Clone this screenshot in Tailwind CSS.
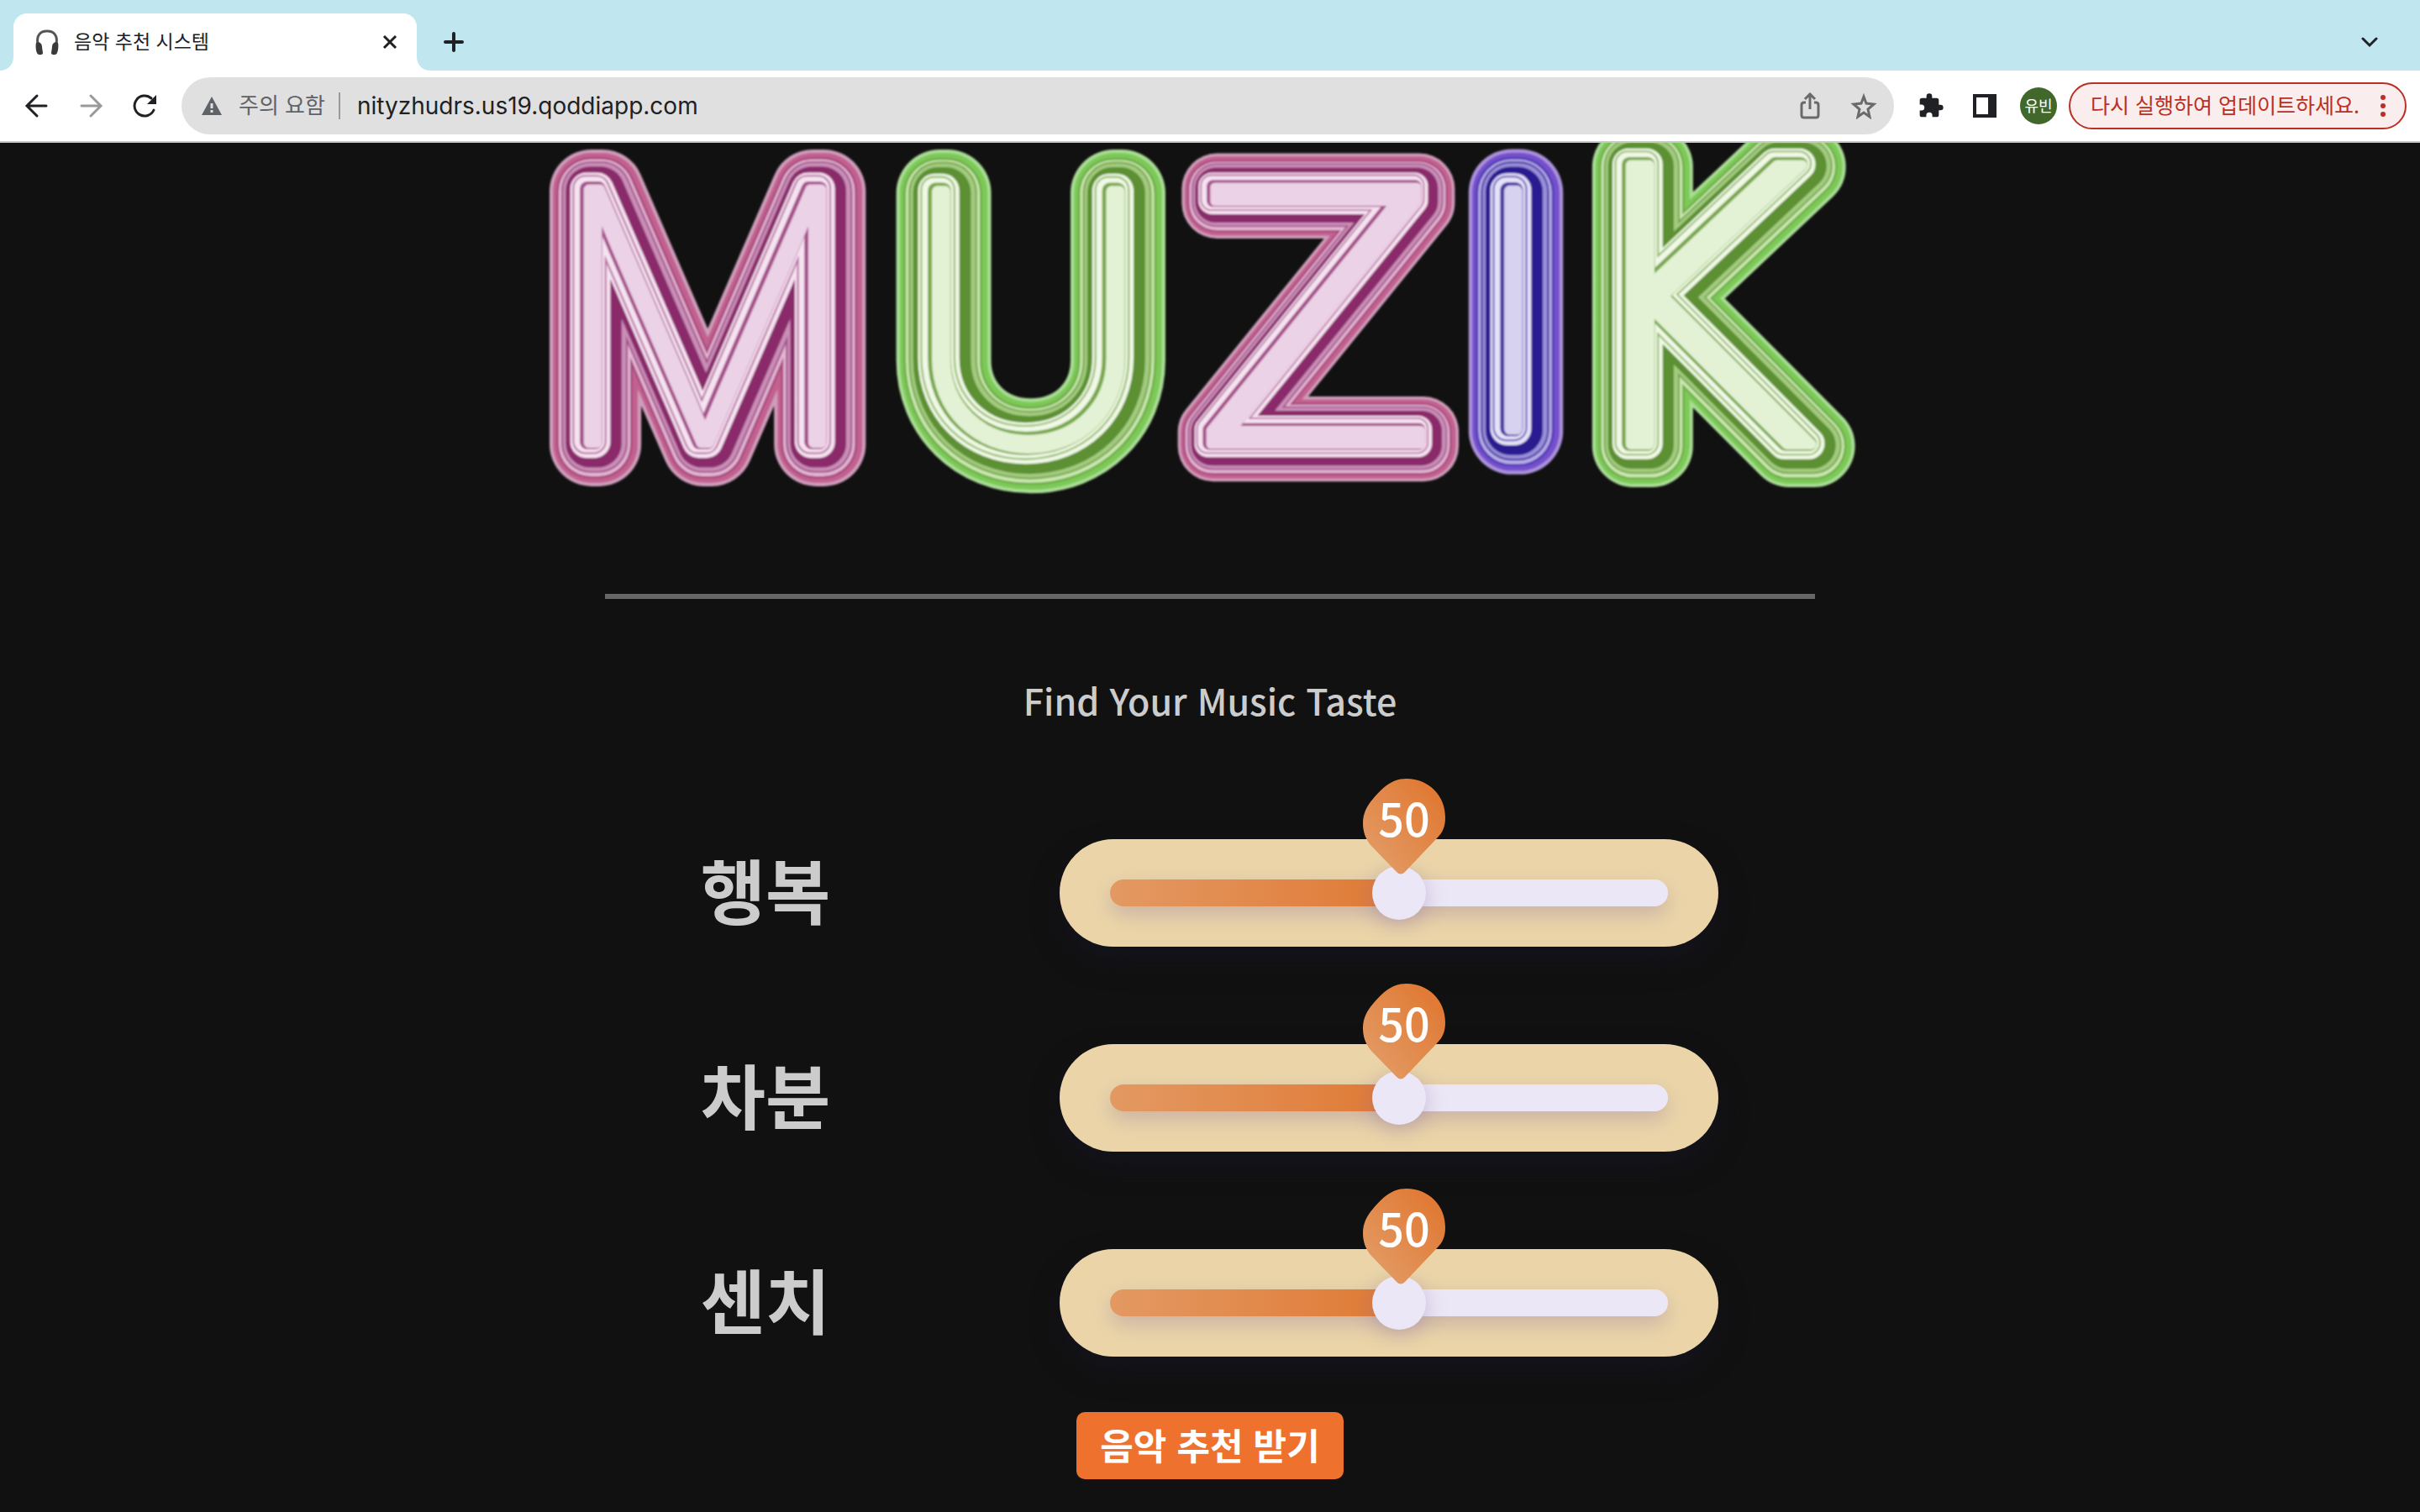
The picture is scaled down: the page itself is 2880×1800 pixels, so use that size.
<!DOCTYPE html>
<html lang="ko">

<head>
  <meta charset="UTF-8">
  <title>음악 추천 시스템</title>
  <meta name="viewport" content="width=device-width, initial-scale=1.0">
  <!-- Tailwind CSS -->
  <script src="https://cdn.jsdelivr.net/npm/@tailwindcss/browser@4"></script>
</head>

<body class="min-h-screen bg-[#111] text-[#ccc] font-['Noto_Sans_CJK_KR',sans-serif] overflow-hidden">
  <!-- Tab strip -->
  <div class="h-[84px] bg-[#c0e6f0] flex items-end pl-4 pr-[50px]">
    <div class="relative w-[480px] h-[68px] bg-white rounded-t-2xl flex items-center pl-6 pr-[22px]">
      <svg class="absolute -left-4 bottom-0 size-4" viewBox="0 0 16 16" fill="#fff"><path d="M16 0v16H0C9 16 16 9 16 0z"/></svg>
      <svg class="absolute -right-4 bottom-0 size-4" viewBox="0 0 16 16" fill="#fff"><path d="M0 0v16h16C7 16 0 9 0 0z"/></svg>
      <svg class="size-8" viewBox="0 0 32 32" fill="none">
        <path d="M5 19C3 8 8 3 16 3s13 5 11 16" stroke="#555" stroke-width="3"/>
        <path d="M3 17c4-2 7 1 7 5l1 7c0 3-6 3-7 0-1-2-2-8-1-12zM29 17c-4-2-7 1-7 5l-1 7c0 3 6 3 7 0 1-2 2-8 1-12z" fill="#3a3a3a"/>
      </svg>
      <span class="ml-4 text-[23px] leading-8 pb-1 text-[#202124] flex-1">음악 추천 시스템</span>
      <button aria-label="탭 닫기"><svg class="size-5" viewBox="0 0 20 20" stroke="#202124" stroke-width="3"><path d="M3 3l14 14M17 3L3 17"/></svg></button>
    </div>
    <button class="ml-8 mb-[22px]" aria-label="새 탭"><svg class="size-6" viewBox="0 0 24 24" stroke="#202124" stroke-width="4" stroke-linecap="round"><path d="M12 2v20M2 12h20"/></svg></button>
    <button class="ml-auto mb-6" aria-label="탭 검색"><svg class="size-5" viewBox="0 0 20 20" fill="none" stroke="#202124" stroke-width="3" stroke-linecap="round"><path d="M2 6l8 8 8-8"/></svg></button>
  </div>

  <!-- Toolbar -->
  <div class="h-[86px] bg-white border-b-2 border-[#c8c8c8] flex items-center pl-7 pr-4">
    <button aria-label="뒤로"><svg class="size-8" viewBox="0 0 32 32" fill="none" stroke="#202124" stroke-width="3" stroke-linecap="round"><path d="M27 16H5M16 4L4 16l12 12"/></svg></button>
    <button class="ml-8" aria-label="앞으로"><svg class="size-8" viewBox="0 0 32 32" fill="none" stroke="#9a9a9a" stroke-width="3" stroke-linecap="round"><path d="M5 16h22M16 4l12 12-12 12"/></svg></button>
    <button class="ml-8" aria-label="새로고침"><svg class="size-8" viewBox="0 0 32 32" fill="none"><path d="M27 21A12 12 0 1 1 24 7" stroke="#202124" stroke-width="3" stroke-linecap="round"/><path d="M30 3v11H19z" fill="#202124"/></svg></button>
    <div class="ml-7 flex-1 h-[68px] rounded-full bg-[#e0e0e0] flex items-center pl-6 pr-5">
      <svg class="size-6" viewBox="0 0 24 24"><path d="M12 1l12 22H0z" fill="#5f6368"/><path d="M12 9v6M12 17v3" stroke="#e0e0e0" stroke-width="3"/></svg>
      <span class="ml-5 pb-1 text-[26px] leading-8 text-[#5f6368]">주의 요함</span>
      <span class="ml-4 w-[2px] h-8 bg-[#9a9a9a]"></span>
      <input class="ml-5 flex-1 text-[28px] text-[#202124] font-['Inter',sans-serif] outline-none" type="text" aria-label="주소" value="nityzhudrs.us19.qoddiapp.com">
      <button aria-label="공유"><svg class="size-8" viewBox="0 0 32 32" fill="none" stroke="#6a6a6a" stroke-width="3"><path d="M11 12H9q-3 0-3 3v12q0 3 3 3h14q3 0 3-3V15q0-3-3-3h-2M16 20V3M10 8l6-6 6 6"/></svg></button>
      <button class="ml-8" aria-label="북마크"><svg class="size-8" viewBox="0 0 32 32" fill="none" stroke="#6a6a6a" stroke-width="3"><path d="M16 5l3 8 9 1-7 6 2 9-7-5-7 5 2-9-7-6 9-1z"/></svg></button>
    </div>
    <button class="ml-7" aria-label="확장 프로그램"><svg class="size-8" viewBox="0 0 24 24" fill="#202124"><path d="M20.500 11H19V7a2 2 0 0 0-2-2h-4V3.500a2.500 2.500 0 0 0-5 0V5H4a2 2 0 0 0-2 2v3.800h1.500a2.700 2.700 0 0 1 0 5.400H2V20a2 2 0 0 0 2 2h3.800v-1.500a2.700 2.700 0 0 1 5.400 0V22H17a2 2 0 0 0 2-2v-4h1.500a2.500 2.500 0 0 0 0-5z"/></svg></button>
    <button class="ml-8" aria-label="사이드 패널"><svg class="size-8" viewBox="0 0 32 32"><path d="M2 2h28v28H2z" fill="#202124"/><path d="M6 6h14v20H6z" fill="#fff"/></svg></button>
    <button class="ml-[26px] size-11 pb-[2px] rounded-full bg-[#41682a] text-white text-[18px] leading-6">유빈</button>
    <button class="ml-[14px] h-14 rounded-full border-2 border-[#b93025] bg-[#f9eded] text-[#b93025] text-[25px] flex items-center pl-6 pr-[22px] gap-6">
      <span class="pb-1 leading-8">다시 실행하여 업데이트하세요.</span>
      <svg class="w-2 h-7" viewBox="0 0 8 28" fill="#b93025"><circle cx="4" cy="4" r="3"/><circle cx="4" cy="14" r="3"/><circle cx="4" cy="24" r="3"/></svg>
    </button>
  </div>

  <main class="flex flex-col items-center">
    <!-- Balloon lettering: every letter is stacked strokes, widest at the back -->
    <svg class="w-[1680px] h-[430px] font-thin" viewBox="-40 0 1680 430" role="img" aria-label="MUZIK" stroke-linejoin="round" stroke-linecap="round">
      <defs>
        <text id="m" class="font-['Inter',sans-serif]" x="17" y="359" font-size="414">M</text>
        <text id="u" class="font-['Inter',sans-serif]" x="438" y="361" font-size="414">U</text>
        <text id="z" class="font-['DejaVu_Sans_Light','DejaVu_Sans',sans-serif]" x="785" y="361" font-size="420">Z</text>
        <text id="i" class="font-['Inter',sans-serif]" x="1164" y="343" font-size="390" text-anchor="middle">I</text>
        <text id="k" class="font-['DejaVu_Sans_Light','DejaVu_Sans',sans-serif]" x="1225" y="361" font-size="456">K</text>
        <filter id="soft" x="-50%" y="-20%" width="200%" height="140%"><feGaussianBlur stdDeviation="1.200"/></filter>
      </defs>
      <g id="art"></g>
    </svg>

    <hr class="mt-[107px] w-1/2 h-[6px] border-0 bg-[#666]">
    <h1 class="mt-[88px] text-[43px] leading-[64px] font-medium">Find Your Music Taste</h1>

    <form id="form" class="w-1/2 mt-[134px] flex flex-col items-center">
      <div id="rows" class="w-full flex flex-col gap-[116px]"></div>
      <button type="button" class="mt-[66px] h-20 px-7 pb-1 rounded-[10px] bg-[#ee722e] text-white text-[43px] leading-[64px] font-bold">음악 추천 받기</button>
    </form>
  </main>

  <script>
    const palettes = {
      pink: ['#cf9dbb', '#c2608f', '#a8487f', '#e2b8d3', '#a4508a', '#c98fb8', '#8a2b6b', '#f5e3f1', '#b870a2', '#f5e3f1', '#a4508a', '#ecd2e6'],
      green: ['#a9dd94', '#7cc957', '#6fae48', '#c9e8b0', '#78a74c', '#a3cb80', '#5b9030', '#f0f8e6', '#92bb6c', '#f0f8e6', '#78a74c', '#e3f1d4'],
      violet: ['#ab92dc', '#7550cc', '#5038b4', '#b8aee8', '#4638a0', '#9a8fd8', '#2b1c90', '#e6e2f8', '#6d60bb', '#e6e2f8', '#4638a0', '#d6d2f0']
    };
    // [stroke width, shift left, shift up] for each colour of a palette
    const rings = [[96, 0, 0], [88, 0, 0], [78, 1, 0], [73, 1, 0], [67, 1, 1], [63, 1, 1], [55, 2, 1], [37, 6, 3], [30, 7, 4], [26, 7, 4], [17, 5, 3], [12, 3, 2]];
    const letters = [['m', 'pink', 1.04], ['u', 'green', 1.08], ['z', 'pink', 0.88], ['i', 'violet', 1.08], ['k', 'green', 1.02]];

    document.getElementById('art').innerHTML = letters.map(([id, tone, scale]) =>
      '<g filter="url(#soft)">' + rings.map(([w, left, up], n) =>
        `<use href="#${id}" x="${-left}" y="${-up}" fill="${palettes[tone][n]}" stroke="${palettes[tone][n]}" stroke-width="${w * scale}"/>`
      ).join('') + '</g>'
    ).join('');

    document.getElementById('rows').innerHTML = ['행복', '차분', '센치'].map((name, n) => `
      <div class="flex items-center justify-between pr-[115px]">
        <label for="mood${n}" class="w-[382px] h-32 text-center text-[84px] leading-[118px] font-bold">${name}</label>
        <div class="relative w-[784px] h-32 px-[60px] rounded-full bg-[#ebd5a8] shadow-[0_16px_32px_#13131c] flex items-center">
          <input id="mood${n}" type="range" min="0" max="100" value="52" class="appearance-none w-full h-8 rounded-full bg-linear-to-r from-[#e39962] from-0% via-[#e07a35] via-50% to-[#ece7f6] to-50% shadow-[0_10px_24px_#8a6fa055] [&::-webkit-slider-thumb]:appearance-none [&::-webkit-slider-thumb]:size-16 [&::-webkit-slider-thumb]:rounded-full [&::-webkit-slider-thumb]:bg-[#ece7f6] [&::-webkit-slider-thumb]:shadow-[0_6px_24px_#8a6fa066]">
          <output for="mood${n}" class="absolute isolate left-[361px] -top-[72px] w-[98px] h-[114px] text-center text-white text-[54px] leading-[92px] font-medium">
            <svg class="absolute inset-0 -z-1" viewBox="0 0 98 114">
              <linearGradient id="pin${n}" x1="0.1" y1="0.8" x2="0.8" y2="0.1"><stop stop-color="#e39962"/><stop offset="1" stop-color="#e07a35"/></linearGradient>
              <path d="M52 0C78 0 98 20 98 46c0 11-3 18-10 25L50 111q-5 5-10 0L10 80C3 72 0 63 0 53c0-12 5-21 12-29C21 14 32 0 52 0z" fill="url(#pin${n})"/>
            </svg>50
          </output>
        </div>
      </div>`).join('');
  </script>
</body>

</html>
